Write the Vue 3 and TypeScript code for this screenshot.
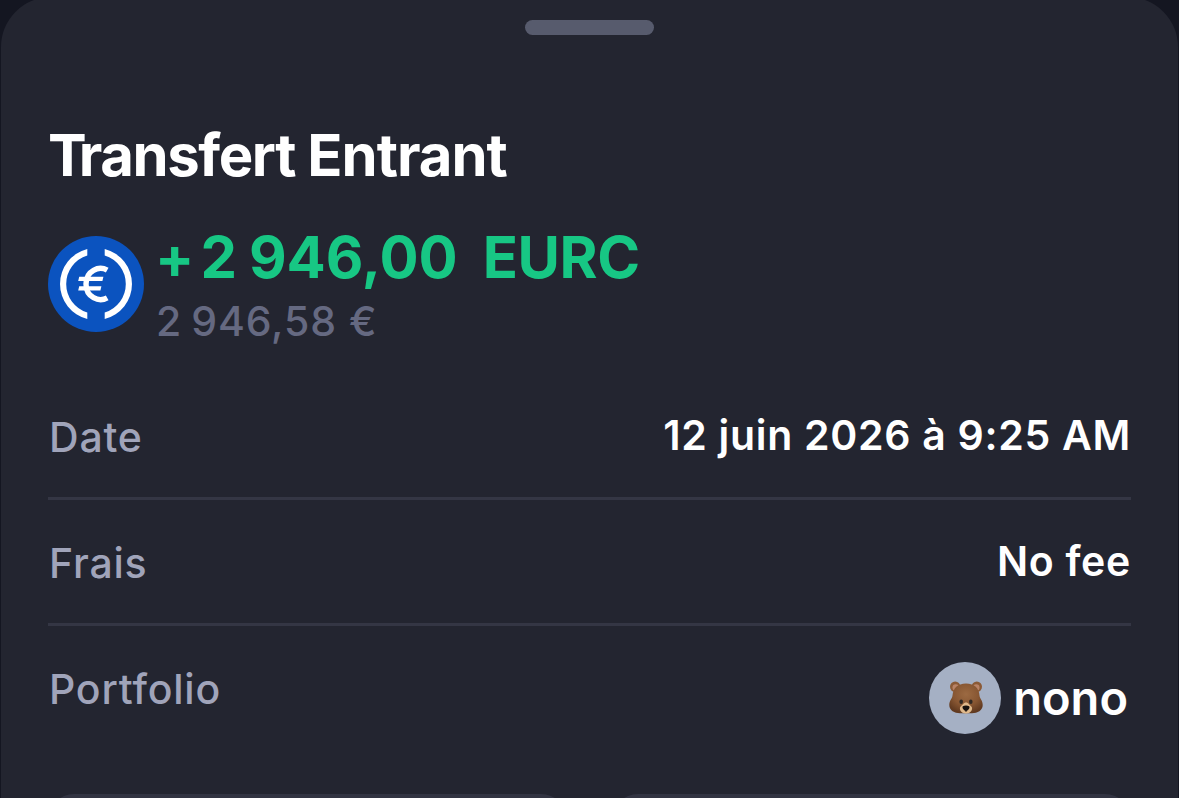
<script setup lang="ts">
interface DetailRow {
  label: string
  value: string
}

const rows: DetailRow[] = [
  { label: 'Date', value: '12 juin 2026 à 9:25 AM' },
  { label: 'Frais', value: 'No fee' },
]
const portfolio = { label: 'Portfolio', name: 'nono' }
</script>

<template>
  <main class="screen">
    <section class="sheet">
      <div class="grabber"></div>
      <h1 class="title"><span class="initial">T</span>ransfert <span class="word">Entrant</span></h1>

      <div class="summary">
        <svg class="coin" viewBox="0 0 96 96" aria-hidden="true">
          <circle cx="48" cy="48" r="48" fill="#0b53bf" />
          <path d="M39.3 13.07A36 36 0 0 0 39.3 82.93V76.5A29.8 29.8 0 0 1 39.3 19.5Z" fill="#fff" />
          <path d="M56.7 13.07A36 36 0 0 1 56.7 82.93V76.5A29.8 29.8 0 0 0 56.7 19.5Z" fill="#fff" />
          <path d="M59.2 34.2C51 29.5 38 34.5 38 48C38 61.5 51 66.5 59.2 61.9" fill="none" stroke="#fff" stroke-width="5.4" />
          <path d="M31.2 40.7H55.4L54.4 44.9H30.2ZM31.2 50.3H53.4L52.4 54.6H30.2Z" fill="#fff" />
        </svg>
        <div class="amounts">
          <div class="amount">
            <span>+</span><span class="thousands">2</span><span class="units">946,00</span><span class="ticker">EURC</span>
          </div>
          <div class="fiat"><span class="fiat-thousands">2</span><span class="fiat-units">946,58</span><span>€</span></div>
        </div>
      </div>

      <div class="details">
        <div v-for="row in rows" :key="row.label" class="row">
          <span class="label">{{ row.label }}</span>
          <span class="value">{{ row.value }}</span>
        </div>
        <div class="row last">
          <span class="label">{{ portfolio.label }}</span>
          <div class="owner">
            <div class="avatar">
              <svg class="bear" viewBox="0 0 36 34" aria-hidden="true">
                <defs>
                  <radialGradient id="fur" cx="0.5" cy="0.36" r="0.64">
                    <stop offset="0" stop-color="#9c6a42" />
                    <stop offset="0.6" stop-color="#875632" />
                    <stop offset="1" stop-color="#613a20" />
                  </radialGradient>
                </defs>
                <circle cx="7.2" cy="5.8" r="5.2" fill="#8b5a36" />
                <circle cx="7.7" cy="6.4" r="3.2" fill="#b98366" />
                <circle cx="28.8" cy="5.8" r="5.2" fill="#8b5a36" />
                <circle cx="28.3" cy="6.4" r="3.2" fill="#b98366" />
                <path d="M18 2.6C26.5 2.6 31 7.6 31.5 14.5C31.8 17.8 34.7 19.4 34.7 24C34.7 29.5 29.5 32.2 24 32.2H12C6.5 32.2 1.3 29.5 1.3 24C1.3 19.4 4.2 17.8 4.5 14.5C5 7.6 9.5 2.6 18 2.6Z" fill="url(#fur)" />
                <path d="M18 21.6C20.5 21.6 21 24 23.3 25.4C25.3 27 23.5 32.5 18 32.5C12.5 32.5 10.7 27 12.7 25.4C15 24 15.5 21.6 18 21.6Z" fill="#dfb98b" />
                <ellipse cx="13.2" cy="20.8" rx="1.8" ry="2.2" fill="#302923" />
                <ellipse cx="22.8" cy="20.8" rx="1.8" ry="2.2" fill="#302923" />
                <path d="M14.8 25.3C16.5 24.3 19.5 24.3 21.2 25.3C22.4 27 19.8 29.6 18 30.3C16.2 29.6 13.6 27 14.8 25.3Z" fill="#17120f" />
                <path d="M18 29.5V31" stroke="#4b3020" stroke-width="1" />
              </svg>
            </div>
            <span class="name">{{ portfolio.name }}</span>
          </div>
        </div>
      </div>

      <div class="actions">
        <div class="action"></div>
        <div class="action"></div>
      </div>
    </section>
  </main>
</template>

<style>
html,
body {
  margin: 0;
  overflow: hidden;
  background: #141621;
}
</style>

<style scoped>
.screen {
  width: 1179px;
  height: 798px;
  overflow: hidden;
  background: #141621;
  font-family: Inter, "Liberation Sans", sans-serif;
}

.sheet {
  box-sizing: border-box;
  width: 1177px;
  height: 900px;
  margin: -3px auto 0;
  padding: 23px 47px 0;
  border-radius: 50px;
  background: #232530;
  display: flex;
  flex-direction: column;
}

.sheet > * {
  flex: none;
}

.grabber {
  width: 129px;
  height: 15px;
  border-radius: 8px;
  background: #575b6d;
  align-self: center;
}

.title {
  margin: 90px 0 0;
  height: 60px;
  line-height: 60px;
  font-size: 58px;
  font-weight: 700;
  letter-spacing: -1.4px;
  color: #fff;
  white-space: nowrap;
}

.initial {
  letter-spacing: -8px;
}

.word {
  letter-spacing: -1px;
}

.summary {
  display: flex;
  height: 120px;
  margin-top: 42px;
}

.coin {
  width: 96px;
  height: 96px;
  margin-top: 9px;
  flex: none;
}

.amounts {
  margin-left: 11px;
  white-space: nowrap;
}

.amount {
  height: 60px;
  line-height: 60px;
  font-size: 58px;
  font-weight: 650;
  color: #17c784;
}

.thousands {
  margin-left: 6px;
}

.units {
  margin-left: 12px;
}

.ticker {
  margin-left: 25px;
  letter-spacing: -0.4px;
}

.fiat {
  height: 50px;
  line-height: 50px;
  margin: 9px 0 0 1px;
  font-size: 41px;
  font-weight: 450;
  letter-spacing: 0.9px;
  color: #656981;
}

.fiat-thousands {
  margin-right: 9px;
}

.fiat-units {
  margin-right: 12px;
}

.details {
  margin-top: 27px;
}

.row {
  box-sizing: border-box;
  height: 126px;
  border-bottom: 3px solid #343644;
  display: flex;
  justify-content: space-between;
  white-space: nowrap;
}

.label {
  margin: 38px 0 0 1px;
  height: 50px;
  line-height: 50px;
  font-size: 41px;
  font-weight: 450;
  letter-spacing: 0.8px;
  color: #a0a4ba;
}

.value {
  margin-top: 36px;
  height: 50px;
  line-height: 50px;
  font-size: 41px;
  font-weight: 600;
  letter-spacing: 0.7px;
  color: #fff;
}

.row.last {
  border-bottom: 0;
}

.owner {
  display: flex;
  margin: 36px 3px 0 0;
  height: 72px;
}

.avatar {
  width: 72px;
  height: 72px;
  border-radius: 50%;
  background: #a5b0c4;
  display: flex;
  align-items: center;
  justify-content: center;
}

.bear {
  width: 36px;
  height: 34px;
  margin-left: 2px;
}

.name {
  margin-left: 12px;
  line-height: 72px;
  font-size: 47px;
  font-weight: 600;
  color: #fff;
}

.actions {
  display: flex;
  justify-content: space-between;
  margin-top: 42px;
}

.action {
  width: 519px;
  height: 72px;
  border-radius: 26px;
  background: #323442;
}
</style>
